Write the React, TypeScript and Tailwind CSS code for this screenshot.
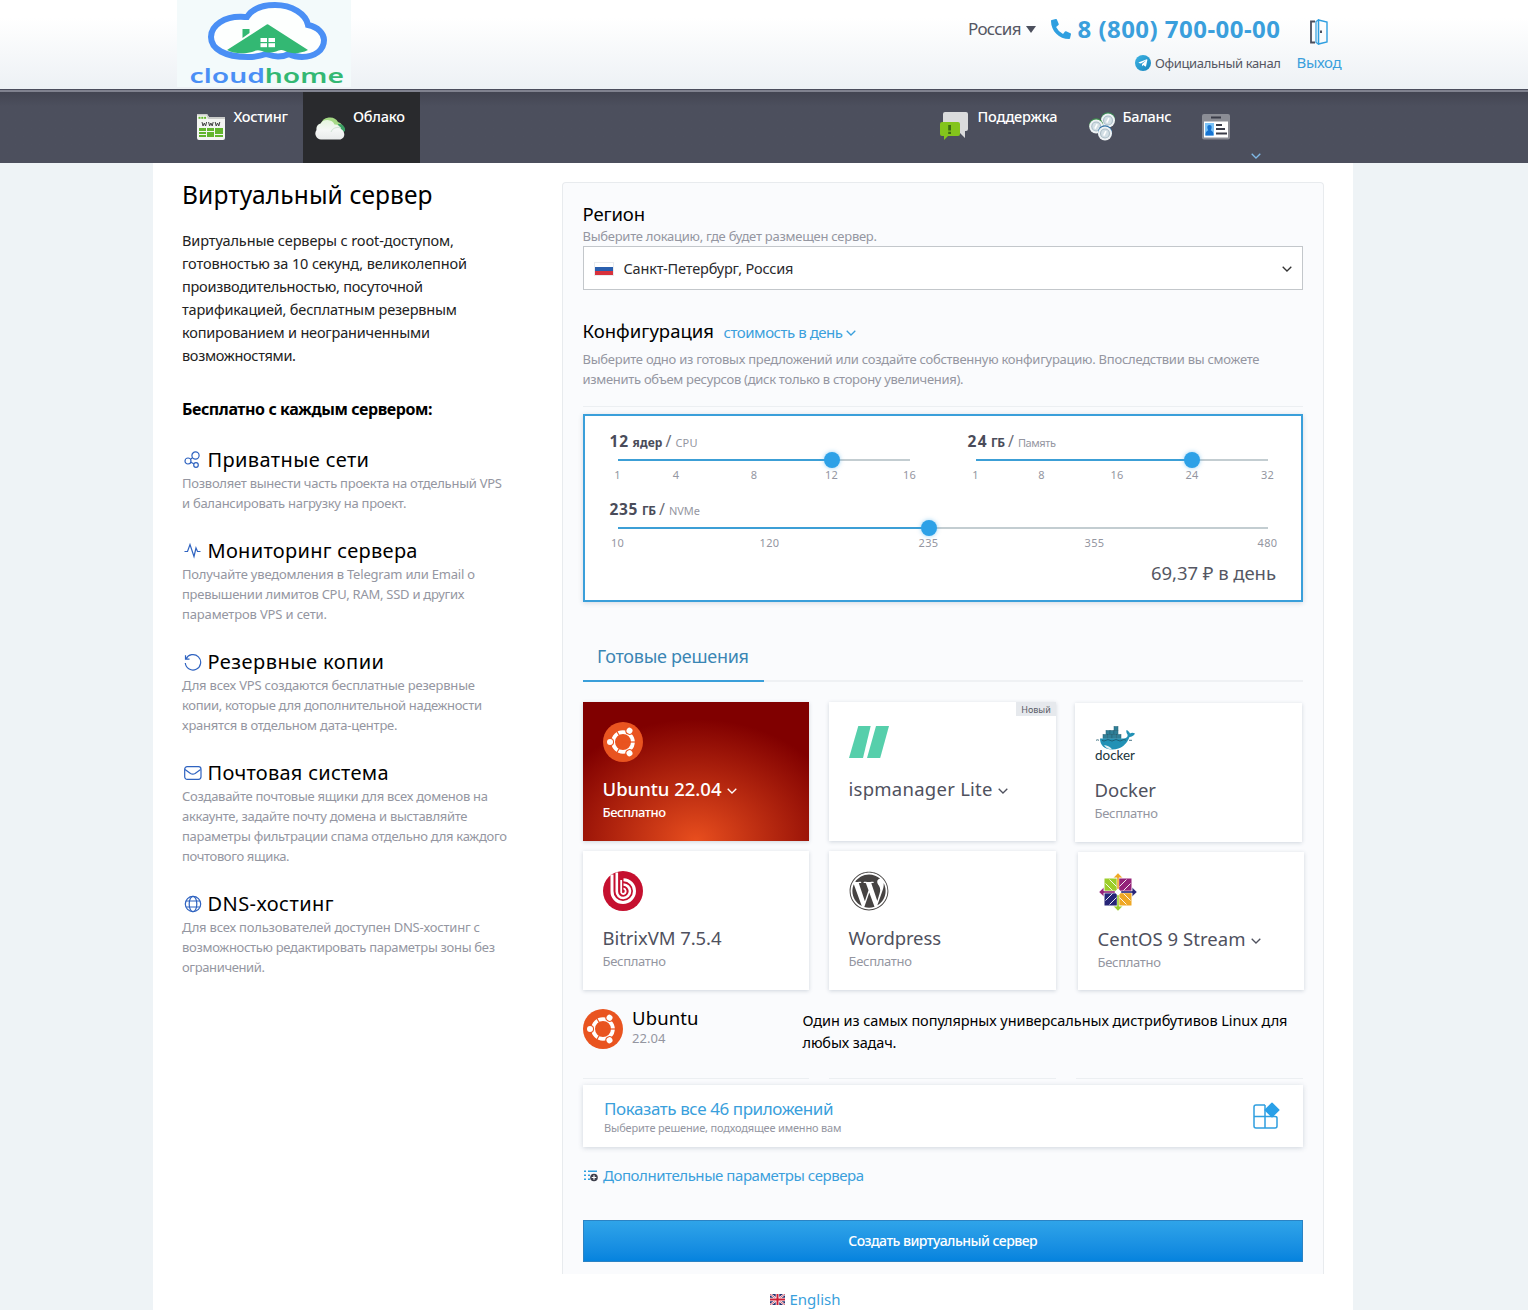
import React, { useLayoutEffect, useRef, useState } from "react";
import { FaPhoneAlt, FaWordpress, FaTelegramPlane } from "react-icons/fa";

/** One line of text whose tracking is adjusted so that it spans `w` pixels. */
function Fit({ w, className = "", children }: { w: number; className?: string; children: string }) {
  const ref = useRef<HTMLSpanElement>(null);
  const [tracking, setTracking] = useState<number | null>(null);
  useLayoutEffect(() => {
    const el = ref.current;
    if (!el || tracking !== null) return;
    setTracking((w + 1 - el.getBoundingClientRect().width) / Math.max(1, children.length - 1));
  }, [w, children, tracking]);
  return (
    <span
      ref={ref}
      className={`inline-block whitespace-nowrap ${className}`}
      style={tracking === null ? undefined : { letterSpacing: tracking, marginRight: -tracking }}
    >
      {children}
    </span>
  );
}

function Lines({ items, className }: { items: [string, number][]; className: string }) {
  return (
    <div className={className}>
      {items.map(([t, w]) => (
        <div key={t}>
          <Fit w={w}>{t}</Fit>
        </div>
      ))}
    </div>
  );
}

const Chevron = ({ className = "" }: { className?: string }) => (
  <svg viewBox="0 0 10 6" className={`h-[6px] w-[10px] ${className}`} fill="none" stroke="currentColor" strokeWidth="1.3">
    <path d="M0.7 0.7 5 5l4.3-4.3" />
  </svg>
);

const Logo = () => (
  <svg viewBox="0 0 174 89" className="-mb-[2px] block h-[89px] w-[174px] overflow-visible">
    <rect width="174" height="87" fill="#f3fafb" />
    <path
      d="M70 17C75 9 85 5 98 5c17 0 31 9 33 20 10 2 16 8.500 16 15 0 10-9 17-22 17-6 0-10-1.500-13-3-3 1.500-7 2.500-11 2.500-5 0-9-1.500-12-2.500-4 1.500-10 3-18 3C48 57 34 49 34 37 34 25 48 16.500 64 16.800c2 .100 4 .200 6 .200Z"
      fill="#fdfffe" stroke="#4a8ff5" strokeWidth="6"
    />
    <path d="M65.500 29h7v4l-7 5Z" fill="#33b873" />
    <path d="M50 50 89 25q1.500-1.500 3 0l39 25c-8 4-17 4-23 1-4-2-6-1-9 .500-5 2-10 1-14-.500-4-1.500-6-1-10 1-8 2-18 2-25-2Z" fill="#33b873" />
    <g fill="#fff">
      <rect x="83.500" y="38" width="6.500" height="4" /><rect x="91.500" y="38" width="6.500" height="4" />
      <rect x="83.500" y="43.200" width="6.500" height="4" /><rect x="91.500" y="43.200" width="6.500" height="4" />
    </g>
    <text x="12.500" y="82.700" textLength="154.500" lengthAdjust="spacingAndGlyphs" fontSize="19" fontWeight="600" fontFamily="'Noto Sans', sans-serif" fill="#4a8ff5">
      cloud<tspan fill="#33b873">home</tspan>
    </text>
  </svg>
);

const DoorIcon = () => (
  <svg viewBox="0 0 20 26" className="block h-[26px] w-5" fill="none">
    <path d="M6 2.500H2v21h4" stroke="#4c4f5d" strokeWidth="1.800" />
    <path d="M7 2.500 9.500 1v24L7 23.500Z" stroke="#2f9fe0" strokeWidth="1.200" />
    <path d="M9.500 1 18 3v20l-8.500 2Z" stroke="#2f9fe0" strokeWidth="1.400" />
    <rect x="11" y="11.500" width="2" height="2.500" fill="#4c4f5d" />
  </svg>
);

const HostingIcon = () => (
  <svg viewBox="0 0 28 26" className="block h-[26px] w-7">
    <path d="M0 0h10l2 3h16v21a2 2 0 0 1-2 2H2a2 2 0 0 1-2-2Z" fill="#f4f5f2" />
    <path d="M0 0h10l2 3h16v2H11L9.500 1.500H0Z" fill="#c9cbc9" />
    <g fill="#62b52c">
      <rect x="1.500" y="2.800" width="2" height="2" /><rect x="4.300" y="2.800" width="2" height="2" /><rect x="7.100" y="2.800" width="2" height="2" />
      <rect x="2" y="14" width="7" height="3" /><rect x="2" y="18" width="7" height="2" /><rect x="2" y="21" width="7" height="2" />
      <rect x="10" y="14" width="7" height="3" /><rect x="10" y="18" width="7" height="5" />
      <rect x="18" y="14" width="8" height="6" /><rect x="18" y="21" width="8" height="2" />
    </g>
    <path d="m5 8 1 4 1.300-3 1.300 3 1-4m2 0 1 4 1.300-3 1.300 3 1-4m2 0 1 4 1.300-3 1.300 3 1-4" fill="none" stroke="#444" strokeWidth="1" />
  </svg>
);

const CloudIcon = () => (
  <svg viewBox="0 0 30 24" className="block h-6 w-[30px]">
    <defs>
      <linearGradient id="cw" x1="0" y1="0" x2="0" y2="1"><stop offset="0" stopColor="#e6f5df" /><stop offset=".5" stopColor="#f5f7f6" /><stop offset="1" stopColor="#e9ebeb" /></linearGradient>
    </defs>
    <path d="M6 8a9 8 0 0 1 17-2 6 6 0 0 1 4 9L10 16Z" fill="#a5d985" />
    <path d="M23 8a6 6 0 0 1 7 7l-5 3Z" fill="#3b9e63" />
    <path d="M6 23.500a6 6 0 0 1-4.500-9.500 6 6 0 0 1 4-6.500 8 7.500 0 0 1 14 1 6.500 6.500 0 0 1 6.500 4.500c4 2 5 9-.500 10.500Z" fill="url(#cw)" />
    <path d="M16 16a7 6 0 0 1 10-4" stroke="#cfe3d4" fill="none" />
  </svg>
);

const SupportIcon = () => (
  <svg viewBox="0 0 28 28" className="block h-7 w-7">
    <path d="M5 0h21a2 2 0 0 1 2 2v15a2 2 0 0 1-2 2h-1v7l-5-5H3V2a2 2 0 0 1 2-2Z" fill="#dadbdc" />
    <path d="M2 10h16a2 2 0 0 1 2 2v10a2 2 0 0 1-2 2H8l-4 4v-4H2a2 2 0 0 1-2-2V12a2 2 0 0 1 2-2Z" fill="#83c41c" />
    <path d="M8.200 13h2.800v5.500H8.200Zm0 6.700h2.800V22H8.200Z" fill="#3c6d12" />
  </svg>
);

const Coin = ({ x, y, c }: { x: number; y: number; c: string }) => (
  <g transform={`translate(${x} ${y})`}>
    <circle cy="-1.300" r="7" fill={c} />
    <circle r="7" fill="#eef2f4" />
    <circle r="5" fill="#a9bcc6" />
    <circle r="3.900" fill="#d3dfe5" />
    <path d="m-1.300 2.200 2.300-4.600" stroke="#fff" strokeWidth="1.600" />
  </g>
);

const BalanceIcon = () => (
  <svg viewBox="0 0 28 29" className="block h-[29px] w-7">
    <Coin x={19} y={8.500} c="#3d8a57" />
    <Coin x={7.200} y={14.500} c="#3f8f4d" />
    <Coin x={16} y={21.500} c="#2d6fa5" />
  </svg>
);

const CardIcon = () => (
  <svg viewBox="0 0 28 26" className="block h-[26px] w-7">
    <rect width="28" height="25.500" rx="2" fill="#8b8d95" />
    <rect x="9" y="2.500" width="10" height="2" fill="#3b3d49" />
    <rect x="2" y="7.500" width="24" height="16" fill="#fff" />
    <rect x="3" y="9" width="9" height="12.500" fill="#7cc3f7" />
    <path d="M7.500 11c3 0 2.300 3.500 1.200 5.200 2 .800 2.800 2.300 2.800 5.300h-8c0-3 .800-4.500 2.800-5.300C5.200 14.500 4.500 11 7.500 11Z" fill="#1673d1" />
    <path d="M14 11h6M14 15h9M14 19.500h11" stroke="#3b3d49" strokeWidth="1.800" />
  </svg>
);

const featureIcons: Record<string, React.ReactNode> = {
  net: (
    <>
      <circle cx="11.500" cy="4.500" r="3.600" /><circle cx="4" cy="10" r="3" /><circle cx="12" cy="14" r="2.300" />
      <path d="m6.500 8.300 2-1.600M6.800 11.200l3 1.600" />
    </>
  ),
  pulse: <path d="M.500 9.500h3L6 2.500l4 12L12 6l1.500 3.500h3" />,
  restore: <path d="M1.500 2.200v4h4M2 6a7.700 7.700 0 1 1-.700 4" />,
  mail: (
    <>
      <rect x=".700" y="2.700" width="16.300" height="12.600" rx="2.500" /><path d="m1 5.500 5.500 4q2.300 1.300 4.600 0l5.500-4" />
    </>
  ),
  globe: (
    <>
      <circle cx="9" cy="9" r="7.700" /><ellipse cx="9" cy="9" rx="3.800" ry="7.700" /><path d="M2 6h14M2 12h14" />
    </>
  ),
};

const FeatureIcon = ({ name }: { name: string }) => (
  <svg viewBox="0 0 18 18" className="mr-[5.5px] h-[18px] w-[18px] text-[#2f63c0]" fill="none" stroke="currentColor" strokeWidth="1.200">
    {featureIcons[name]}
  </svg>
);

const features: { icon: string; title: [string, number]; text: [string, number][] }[] = [
  { icon: "net", title: ["Приватные сети", 160.5], text: [["Позволяет вынести часть проекта на отдельный VPS", 319], ["и балансировать нагрузку на проект.", 223.5]] },
  { icon: "pulse", title: ["Мониторинг сервера", 209], text: [["Получайте уведомления в Telegram или Email о", 292], ["превышении лимитов CPU, RAM, SSD и других", 281.5], ["параметров VPS и сети.", 144]] },
  { icon: "restore", title: ["Резервные копии", 175.5], text: [["Для всех VPS создаются бесплатные резервные", 292], ["копии, которые для дополнительной надежности", 299], ["хранятся в отдельном дата-центре.", 214.5]] },
  { icon: "mail", title: ["Почтовая система", 180], text: [["Создавайте почтовые ящики для всех доменов на", 305], ["аккаунте, задайте почту домена и выставляйте", 284.5], ["параметры фильтрации спама отдельно для каждого", 324], ["почтового ящика.", 106.5]] },
  { icon: "globe", title: ["DNS-хостинг", 125], text: [["Для всех пользователей доступен DNS-хостинг с", 297], ["возможностью редактировать параметры зоны без", 312], ["ограничений.", 82]] },
];

const UbuntuLogo = () => (
  <svg viewBox="-20 -20 40 40" className="block h-10 w-10">
    <circle r="20" fill="#e95420" />
    <circle r="9.900" fill="none" stroke="#fff" strokeWidth="3.800" />
    {[60, 180, 300].map((a) => (
      <g key={a} transform={`rotate(${a})`}>
        <path d="M0 0H-13" stroke="#e95420" strokeWidth="1.200" />
        <circle cx="13" r="4.100" fill="#e95420" />
        <circle cx="13" r="3" fill="#fff" />
      </g>
    ))}
  </svg>
);

const IspLogo = () => (
  <svg viewBox="0 0 40 40" className="block h-10 w-10" fill="#56cfab">
    <path d="M9.300 4h12.400L14 36H0Z" /><path d="M27 4h13l-8.800 32H18Z" />
  </svg>
);

const DockerLogo = () => (
  <svg viewBox="0 0 40 40" className="block h-10 w-10 overflow-visible">
    <g fill="#2f7f97" stroke="#215f73" strokeWidth=".500">
      <rect x="19" y="3.500" width="4" height="4" />
      <rect x="11" y="7.500" width="4" height="4" /><rect x="15" y="7.500" width="4" height="4" /><rect x="19" y="7.500" width="4" height="4" />
      <rect x="8" y="11.500" width="4.500" height="4" /><rect x="12.500" y="11.500" width="4.500" height="4" /><rect x="17" y="11.500" width="4.500" height="4" /><rect x="21.500" y="11.500" width="4.500" height="4" />
    </g>
    <path d="M5 15.500h24c3-.500 4-2 3.500-4-1-1.500-1.500-3-1-4.500 1.500.500 3 2 3.500 3.500 1.500-1 3.500-.700 5 0-1 2-3.500 3.500-5.500 3.500C32 21 26 26.500 17.500 26.500 9 26.500 5 22 5 15.500Z" fill="#2291b5" />
    <path d="M9 22c3 .500 6 1.500 8 4.300-4 0-6.500-1.500-8-4.300Z" fill="#e4f0f3" />
    <path d="M1 17.300q1.500-1 3 0m3 0q2 1.500 4 0t4 0 4 0 4 0 4 0 4 0m3 0h3" fill="none" stroke="#1c566a" strokeWidth=".800" />
    <text x="0" y="37" textLength="40" lengthAdjust="spacingAndGlyphs" fontSize="13" fontFamily="Lato, sans-serif" fill="#20343c">docker</text>
  </svg>
);

const BitrixLogo = () => (
  <svg viewBox="0 0 40 40" className="block h-10 w-10">
    <circle cx="20" cy="20" r="20" fill="#c5102f" />
    <g fill="none" stroke="#fff">
      <path d="M9 3.500V20a11 11 0 0 0 11 11.500 11.500 11.500 0 0 0 11.500-11.500A11.300 11.300 0 0 0 20.500 8.700" strokeWidth="3" />
      <path d="M13.800 1.500V20.500a6.500 6.500 0 0 0 6.400 6.500 7 7 0 0 0 6.800-7 6.800 6.800 0 0 0-6.500-6.500" strokeWidth="2.600" />
      <path d="M18.200 9v12.500q.500 1.500 2 1.500a3 3 0 0 0 2.500-3 3 3 0 0 0-2.200-2.700" strokeWidth="1.800" />
    </g>
  </svg>
);

const CentosLogo = () => (
  <svg viewBox="-20 -20 40 40" className="block h-10 w-10">
    {[
      { a: 0, box: "#9ccd2a", arrow: "#efa724" },
      { a: 90, box: "#932279", arrow: "#262577" },
      { a: 180, box: "#efa724", arrow: "#9ccd2a" },
      { a: 270, box: "#262577", arrow: "#932279" },
    ].map(({ a, box, arrow }) => (
      <g key={a} transform={`rotate(${a})`}>
        <rect x="-13.500" y="-13.500" width="12.300" height="12.300" fill={box} />
        <path d="m-12.500-8.500 7 7M-8.500-12.500l7 7" stroke="#fff" strokeWidth=".900" />
        <path d="M0-19-4.500-14.200H-1V-3H1v-11.200H4.500Z" fill={arrow} stroke="#fff" strokeWidth=".400" />
      </g>
    ))}
    <circle r="2.600" fill="#fff" />
  </svg>
);

const GridIcon = () => (
  <svg viewBox="0 0 28 28" className="block h-7 w-7" fill="none" stroke="#2f9fe0" strokeWidth="1.500">
    <path d="M13 3H4Q2 3 2 5v19q0 2 2 2h19q2 0 2-2v-8q0-1.500-2-1.500H2M13 3v23" />
    <path d="m20 1.200 6.800 6.800-6.800 6.800L13.200 8Z" fill="#2aa0e8" stroke="#2aa0e8" strokeLinejoin="round" />
  </svg>
);

const ListPlusIcon = () => (
  <svg viewBox="0 0 15 12" className="mt-px block h-3 w-[15px]">
    <path d="M1 1.200h2M1 5.200h2M1 9.200h2M5 1.200h9M5 5.200h2M5 9.200h2" stroke="#2f9fe0" strokeWidth="1.500" />
    <circle cx="11" cy="7.500" r="3.800" fill="#3d3f4c" />
    <path d="M11 5.200v4.600M8.700 7.500h4.600" stroke="#fff" strokeWidth="1.200" />
  </svg>
);

const UkFlag = () => (
  <svg viewBox="0 0 15 11" className="block h-[11px] w-[15px]">
    <rect width="15" height="11" fill="#27306f" />
    <path d="m0 0 15 11M15 0 0 11" stroke="#fff" strokeWidth="2.200" />
    <path d="m0 0 15 11M15 0 0 11" stroke="#cf3447" strokeWidth=".800" />
    <path d="M7.500 0v11M0 5.500h15" stroke="#fff" strokeWidth="3.600" />
    <path d="M7.500 0v11M0 5.500h15" stroke="#cf2038" strokeWidth="2" />
  </svg>
);

type SliderProps = { value: [string, number]; unit: [string, number]; name: [string, number]; length: number; at: number; ticks: [string, number][] };

function Slider({ value, unit, name, length, at, ticks }: SliderProps) {
  return (
    <div>
      <div className="flex h-[22px] items-baseline pl-[0.5px] leading-[22px] text-[#4a4c5a]">
        <span className="text-[15.5px] font-bold"><Fit w={value[1]}>{value[0]}</Fit></span>
        <span className="ml-[4.500px] text-[12px] font-bold"><Fit w={unit[1]}>{unit[0]}</Fit></span>
        <span className="ml-[3px] text-[16px] text-[#6c6e79]">/</span>
        <span className="ml-[4px] text-[11px] text-[#9496a1]"><Fit w={name[1]}>{name[0]}</Fit></span>
      </div>
      <div className="relative ml-[8.500px] mt-[7px] h-[2px] bg-[#c3cdd1]" style={{ width: length }}>
        <div className="h-[2px] bg-[#3c9fd6]" style={{ width: at }} />
        <div className="absolute -top-[7px] h-4 w-4 -translate-x-1/2 rounded-full bg-[#2da1e7] shadow-[0_0_4px_rgba(45,161,231,0.5)]" style={{ left: at }} />
        {ticks.map(([t, x]) => (
          <span key={t} className="absolute top-[7px] -translate-x-1/2 text-[11px] leading-[18px] tracking-[0.3px] text-[#9496a1]" style={{ left: x }}>{t}</span>
        ))}
      </div>
    </div>
  );
}

type CardProps = { logo: React.ReactNode; title: [string, number]; free?: boolean; arrow?: boolean; badge?: string; active?: boolean; className: string };

function AppCard({ logo, title, free, arrow, badge, active, className }: CardProps) {
  return (
    <div
      className={`relative px-5 pt-5 shadow-[0_1px_4px_rgba(60,80,110,0.22)] ${
        active ? "bg-[radial-gradient(ellipse_155px_122px_at_50%_100%,#e84e1e_0%,#800000_100%)] bg-[#800000] text-white" : "bg-white text-[#4f515e]"
      } ${className}`}
    >
      {logo}
      <div className={`-ml-[0.5px] mt-[15px] flex h-6 items-center text-[18.5px] leading-6 ${active ? "font-medium" : ""}`}>
        <Fit w={title[1]}>{title[0]}</Fit>
        {arrow && <Chevron className="ml-[5px] mt-[3px]" />}
      </div>
      {free && (
        <div className={`-ml-[0.5px] mt-px text-[13px] leading-5 ${active ? "font-medium" : "text-[#9496a1]"}`}>
          <Fit w={62.5}>Бесплатно</Fit>
        </div>
      )}
      {badge && (
        <span className="absolute right-0 top-0 h-[14px] w-10 bg-[#e6e9ed] text-center text-[9px] leading-[15px] text-[#5b5d68]">
          <Fit w={28.5}>{badge}</Fit>
        </span>
      )}
    </div>
  );
}

export default function App() {
  return (
    <div className="h-[1310px] w-[1528px] overflow-hidden bg-[#eef3f6] font-['Noto_Sans','Open_Sans',sans-serif] text-black">
      <header className="h-[89px] bg-linear-to-b from-white from-20% to-[#edf1f5]">
        <div className="flex items-start pl-[177px]">
          <Logo />
          <div className="ml-[617px] flex w-[137px] flex-col pt-[17px]">
            <div className="flex w-[313px] items-center">
              <span className="text-[17px] leading-6 text-[#555763]"><Fit w={52.500}>Россия</Fit></span>
              <span className="ml-[4px] h-0 w-0 border-x-[5.500px] border-t-[7px] border-x-transparent border-t-[#4c4f5d]" />
              <FaPhoneAlt className="ml-[15px] h-5 w-5 shrink-0 text-[#2f9fe0]" />
              <span className="ml-[7px] text-[24px] font-bold leading-6 text-[#3a9fdc]"><Fit w={201.5}>8 (800) 700-00-00</Fit></span>
            </div>
            <div className="mt-[12px] flex w-[313px] items-center pl-[167px] text-[13px] leading-5 text-[#555763]">
              <span className="mr-1 flex h-4 w-4 shrink-0 items-center justify-center rounded-full bg-linear-to-br from-[#3eb4e4] to-[#1585bd]">
                <FaTelegramPlane className="mr-px h-[10px] w-[10px] text-white" />
              </span>
              <Fit w={125}>Официальный канал</Fit>
            </div>
          </div>
          <div className="ml-[192px] flex flex-col pt-[19px] text-[15px] leading-5 text-[#3a9fdc]">
            <div className="ml-[12px]"><DoorIcon /></div>
            <div className="-ml-[0.5px] mt-[7px]"><Fit w={44}>Выход</Fit></div>
          </div>
        </div>
      </header>

      <nav className="relative h-[74px] border-t border-[#4b4d5c] bg-[#4c4f5d]">
        <div className="h-[2px] bg-[#80828f]" />
        <div className="flex h-[71px] bg-linear-to-b from-[#434552] to-[#4c4f5d] to-20% pl-[197px] text-[14.500px] font-medium leading-6 text-white">
          <div className="flex w-[106px]">
            <div className="mt-[22px]"><HostingIcon /></div>
            <span className="ml-[8.5px] mt-[12px]"><Fit w={53.500}>Хостинг</Fit></span>
          </div>
          <div className="flex w-[117px] bg-[#292a2d] pl-3">
            <div className="mt-[24px]"><CloudIcon /></div>
            <span className="ml-[8px] mt-[12px]"><Fit w={51}>Облако</Fit></span>
          </div>
          <div className="ml-[520px] flex w-[149px]">
            <div className="mt-[20px]"><SupportIcon /></div>
            <span className="ml-[9.5px] mt-[12px]"><Fit w={79}>Поддержка</Fit></span>
          </div>
          <div className="flex w-[113px]">
            <div className="mt-[20px]"><BalanceIcon /></div>
            <span className="ml-[5.5px] mt-[12px]"><Fit w={48}>Баланс</Fit></span>
          </div>
          <div className="mt-[22px]"><CardIcon /></div>
          <Chevron className="ml-[21px] mt-[61px] w-[9px] text-[#7fb9e6]" />
        </div>
      </nav>

      <main className="ml-[153px] flex h-[1147px] w-[1200px] bg-white">
        <aside className="w-[409px] shrink-0 pl-[29px] pt-[17px]">
          <h1 className="text-[24.5px] leading-[30px]"><Fit w={249.500}>Виртуальный сервер</Fit></h1>
          <Lines
            className="mt-[19px] text-[14.5px] leading-[23px] text-[#222]"
            items={[
              ["Виртуальные серверы с root-доступом,", 271], ["готовностью за 10 секунд, великолепной", 284],
              ["производительностью, посуточной", 240], ["тарификацией, бесплатным резервным", 274],
              ["копированием и неограниченными", 247], ["возможностями.", 113],
            ]}
          />
          <h2 className="mb-[26px] mt-[30px] text-[16px] font-bold leading-6"><Fit w={249.500}>Бесплатно с каждым сервером:</Fit></h2>
          {features.map((f) => (
            <section key={f.icon} className="mb-[25px]">
              <h3 className="flex h-[25px] items-center pl-[2px] pt-px text-[20px] leading-6">
                <FeatureIcon name={f.icon} />
                <Fit w={f.title[1]}>{f.title[0]}</Fit>
              </h3>
              <Lines className="mt-px text-[13px] leading-5 text-[#9496a1]" items={f.text} />
            </section>
          ))}
        </aside>

        <div className="w-[762px]">
          <div className="mt-[19px] h-[1092px] rounded-t-sm border border-b-0 border-[#e8ebee] bg-[#fafbfd] px-5 pt-[19px]">
            <h2 className="-ml-[0.5px] text-[18.5px] leading-6"><Fit w={61.500}>Регион</Fit></h2>
            <p className="-ml-[0.5px] text-[13px] leading-5 text-[#9496a1]"><Fit w={293.500}>Выберите локацию, где будет размещен сервер.</Fit></p>
            <div className="flex h-11 w-[720px] items-center border border-[#c3c7cb] bg-white pl-[10px] pr-[10px] pt-px text-[14.5px] text-[#2a2a2e]">
              <span className="mr-[9.5px] flex h-[14px] w-5 flex-col border border-[#e9ebee]">
                <span className="grow bg-white" /><span className="grow bg-[#2a5fae]" /><span className="grow bg-[#d8313c]" />
              </span>
              <Fit w={169}>Санкт-Петербург, Россия</Fit>
              <Chevron className="ml-auto mt-px text-[#333]" />
            </div>
            <div className="-ml-[0.5px] mt-[29px] flex h-6 items-baseline">
              <h2 className="text-[18.5px] leading-6"><Fit w={130.500}>Конфигурация</Fit></h2>
              <span className="ml-[9.5px] text-[15px] leading-6 text-[#3a9fdc]"><Fit w={118.500}>стоимость в день</Fit></span>
              <Chevron className="ml-[3px] -translate-y-[2px] text-[#3a9fdc]" />
            </div>
            <Lines
              className="-ml-[0.5px] mt-[6px] text-[13px] leading-5 text-[#9496a1]"
              items={[
                ["Выберите одно из готовых предложений или создайте собственную конфигурацию. Впоследствии вы сможете", 676],
                ["изменить объем ресурсов (диск только в сторону увеличения).", 380],
              ]}
            />
            <div className="mt-[17px] h-px bg-[#eceff2]" />

            <div className="mt-[7px] h-[188px] w-[720px] border-2 border-[#3a9fda] bg-white pl-6 pt-[14px] shadow-[0_1px_5px_rgba(60,80,110,0.2)]">
              <div className="flex h-[68px]">
                <div className="w-[358px]">
                  <Slider value={["12", 17.5]} unit={["ядер", 29]} name={["CPU", 21]} length={292} at={214.5} ticks={[["1", 0], ["4", 58.5], ["8", 136.5], ["12", 214], ["16", 292]]} />
                </div>
                <Slider value={["24", 18]} unit={["ГБ", 13]} name={["Память", 37]} length={292} at={216.5} ticks={[["1", 0], ["8", 66], ["16", 141.5], ["24", 216.5], ["32", 292]]} />
              </div>
              <Slider value={["235", 27]} unit={["ГБ", 13]} name={["NVMe", 30]} length={650} at={311.5} ticks={[["10", 0], ["120", 152], ["235", 311], ["355", 477], ["480", 650]]} />
              <div className="mt-[32px] pr-[25px] text-right text-[18.500px] leading-6 text-[#555763]"><Fit w={124}>69,37 ₽ в день</Fit></div>
            </div>

            <div className="mt-[42px] flex h-[38px] w-[720px] border-b-2 border-[#eff1f4] text-[18px] leading-6 text-[#3a86b4]">
              <div className="h-[38px] w-[181px] border-b-2 border-[#3a9fda] pl-[14px]"><Fit w={151}>Готовые решения</Fit></div>
            </div>

            <div className="mt-5 flex h-[149px] items-start">
              <AppCard active arrow free className="h-[139px] w-[226px]" logo={<UbuntuLogo />} title={["Ubuntu 22.04", 118]} />
              <AppCard arrow badge="Новый" className="ml-5 h-[139px] w-[227px]" logo={<IspLogo />} title={["ispmanager Lite", 143]} />
              <AppCard free className="ml-[19px] mt-px h-[139px] w-[227px]" logo={<DockerLogo />} title={["Docker", 60.5]} />
            </div>
            <div className="flex h-[158px] w-[722px] items-start">
              <AppCard free className="h-[139px] w-[226px]" logo={<BitrixLogo />} title={["BitrixVM 7.5.4", 118]} />
              <AppCard free className="ml-5 h-[139px] w-[227px]" logo={<FaWordpress className="block h-10 w-10 text-[#464342]" />} title={["Wordpress", 91.5]} />
              <AppCard arrow free className="ml-[22px] mt-px h-[138px] w-[226px]" logo={<CentosLogo />} title={["CentOS 9 Stream", 147]} />
            </div>

            <div className="flex h-[69px]">
              <UbuntuLogo />
              <div className="ml-[9px] w-[170.5px]">
                <div className="-mt-[3px] text-[18.5px] leading-6"><Fit w={65.500}>Ubuntu</Fit></div>
                <div className="-mt-[2px] text-[13px] leading-5 text-[#9496a1]"><Fit w={32.500}>22.04</Fit></div>
              </div>
              <Lines className="text-[14.5px] leading-[22px]" items={[["Один из самых популярных универсальных дистрибутивов Linux для", 484], ["любых задач.", 93]]} />
            </div>
            <div className="flex h-px gap-5">
              <div className="w-[226px] bg-[#eceff2]" /><div className="w-[227px] bg-[#eceff2]" /><div className="w-[227px] bg-[#eceff2]" />
            </div>

            <div className="mt-[6px] flex h-[62px] w-[720px] items-center justify-between bg-white pl-[21px] pr-[23px] shadow-[0_1px_5px_rgba(60,80,110,0.22)]">
              <div className="pt-[3px]">
                <div className="text-[17px] leading-5 text-[#3a9fdc]"><Fit w={228.500}>Показать все 46 приложений</Fit></div>
                <div className="text-[11px] leading-[18px] text-[#9496a1]"><Fit w={236.500}>Выберите решение, подходящее именно вам</Fit></div>
              </div>
              <GridIcon />
            </div>

            <div className="mt-[16px] flex h-6 items-center text-[15px] leading-6 text-[#3a9fdc]">
              <ListPlusIcon />
              <span className="ml-[5px]"><Fit w={260}>Дополнительные параметры сервера</Fit></span>
            </div>

            <button className="mt-[33px] block h-[42px] w-[720px] border border-[#2b83c4] bg-linear-to-b from-[#2fa4e9] to-[#0583de] text-[14px] font-medium leading-10 text-white">
              <Fit w={188.500}>Создать виртуальный сервер</Fit>
            </button>
          </div>
          <div className="mt-[13px] flex h-6 items-center pl-[207.5px] text-[15px] leading-6 text-[#3a9fdc]">
            <UkFlag />
            <span className="ml-[5px]"><Fit w={50}>English</Fit></span>
          </div>
        </div>
      </main>
    </div>
  );
}
